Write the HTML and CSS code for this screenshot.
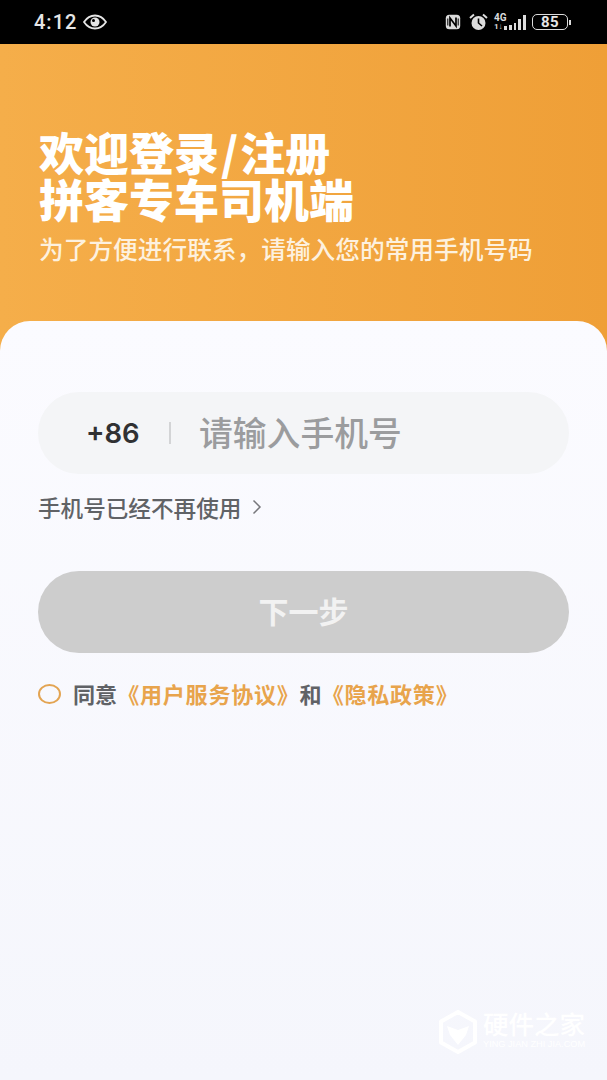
FILE: index.html
```html
<!DOCTYPE html>
<html lang="zh-CN">
<head>
<meta charset="utf-8">
<title>拼客专车司机端</title>
<link rel="stylesheet" href="styles.css">
</head>
<body>
<div class="status">
  <div class="status-left">
    <span class="time">4:12</span>
    <svg class="eye" width="24" height="16" viewBox="0 0 24 16">
      <path d="M1 8C4 3.500 8 1.500 12 1.500S20 3.500 23 8C20 12.500 16 14.500 12 14.500S4 12.500 1 8Z" fill="none" stroke="#e6e6e6" stroke-width="1.800"/>
      <circle cx="12" cy="8" r="4.500" fill="#e6e6e6"/>
      <circle cx="10.500" cy="6.500" r="1.500" fill="#000"/>
    </svg>
  </div>
  <div class="status-right">
    <svg class="nfc" width="16" height="16" viewBox="0 0 16 16">
      <rect x="0.800" y="0.800" width="14.400" height="14.400" rx="3.500" fill="#dcdcdc"/>
      <path d="M5 12.500V4L11 12V3.500" fill="none" stroke="#000" stroke-width="1.700"/>
      <path d="M2.800 4.500V11.500M13.200 4.500V11.500" stroke="#000" stroke-width="1"/>
    </svg>
    <svg class="alarm" width="19" height="18" viewBox="0 0 19 18">
      <circle cx="9.500" cy="10" r="7" fill="#dcdcdc"/>
      <path d="M9.500 5.500V10L13 13" fill="none" stroke="#000" stroke-width="1.600"/>
      <path d="M1 5L5 1.500M18 5L14 1.500" stroke="#dcdcdc" stroke-width="2"/>
    </svg>
    <div class="net">
      <span class="net-g">4G</span>
      <span class="net-s">1↓</span>
    </div>
    <div class="signal">
      <i class="s1"></i><i class="s2"></i><i class="s3"></i><i class="s4"></i><i class="s5"></i>
    </div>
    <div class="battery"><span>85</span></div>
    <div class="battery-tip"></div>
  </div>
</div>

<div class="hero">
  <h1>欢迎登录<span class="slash">/</span>注册<br>拼客专车司机端</h1>
  <p>为了方便进行联系，请输入您的常用手机号码</p>
</div>

<div class="card">
  <div class="phone">
    <span class="code">+86</span>
    <span class="sep"></span>
    <span class="hint">请输入手机号</span>
  </div>
  <div class="lost">
    <span>手机号已经不再使用</span>
    <svg width="10" height="16" viewBox="0 0 10 16"><path d="M1.500 1.500L8 8L1.500 14.500" fill="none" stroke="#77777b" stroke-width="1.500"/></svg>
  </div>
  <div class="next"><span>下一步</span></div>
  <div class="agree">
    <span class="radio"></span>
    <span class="agree-text">同意<a>《用户服务协议》</a>和<a>《隐私政策》</a></span>
  </div>
</div>

<div class="mark">
  <svg width="38" height="44" viewBox="0 0 38 44">
    <path d="M19 2L36 11.500V32.500L19 42L2 32.500V11.500Z" fill="none" stroke="#fff" stroke-width="4" stroke-linejoin="round"/>
    <path d="M8 16L19 20L30 16L27 25L19 35L11 25Z" fill="#fff"/>
  </svg>
  <div class="mark-text">
    <div class="mark-cn">硬件之家</div>
    <div class="mark-en">YING JIAN ZHI JIA.COM</div>
  </div>
</div>
</body>
</html>
```

FILE: styles.css
```css
* {
  box-sizing: border-box;
}
html, body {
  margin: 0;
  height: 1080px;
  overflow: hidden;
}
body {
  position: relative;
  display: flex;
  flex-direction: column;
  background: #f5f6fc;
  font-family: "Noto Sans CJK SC", "Noto Sans", sans-serif;
}

/* status bar */
.status {
  height: 44px;
  flex: none;
  background: #000;
  display: flex;
  align-items: center;
  justify-content: space-between;
  padding: 0 36px 0 34px;
  color: #e6e6e6;
}
.status-left {
  display: flex;
  align-items: center;
  gap: 6px;
}
.time {
  font-family: Roboto, sans-serif;
  font-size: 20px;
  font-weight: 500;
  letter-spacing: 1px;
}
.status-right {
  display: flex;
  align-items: center;
}
.nfc {
  margin-right: 8px;
}
.alarm {
  margin-right: 6px;
}
.net {
  display: flex;
  flex-direction: column;
  width: 10px;
  font-family: Roboto, sans-serif;
  font-weight: 700;
  color: #dcdcdc;
  line-height: 9px;
}
.net-g {
  font-size: 10px;
  white-space: nowrap;
}
.net-s {
  font-size: 8px;
  white-space: nowrap;
}
.signal {
  display: flex;
  align-items: flex-end;
  gap: 2px;
  height: 15px;
  margin-top: 1px;
  margin-right: 6px;
}
.signal i {
  width: 2.800px;
  background: #dcdcdc;
}
.s1 { height: 4px; }
.s2 { height: 5px; }
.s3 { height: 7px; }
.s4 { height: 11px; }
.s5 { height: 15px; }
.battery {
  width: 36px;
  height: 16px;
  border: 1.500px solid #dcdcdc;
  border-radius: 5px;
  display: flex;
  align-items: center;
  justify-content: center;
  font-family: Roboto, sans-serif;
  font-size: 15px;
  font-weight: 700;
  color: #e6e6e6;
  letter-spacing: 0.5px;
}
.battery-tip {
  width: 2px;
  height: 5px;
  margin-left: 1px;
  background: #dcdcdc;
}

/* orange header */
.hero {
  height: 307px;
  flex: none;
  padding: 84px 39px 0;
  color: #fff;
  background: linear-gradient(90deg, #f5ae4a, #ef9f37);
}
.hero h1 {
  margin: 0;
  font-size: 45px;
  line-height: 47px;
  font-weight: 900;
}
.slash {
  margin: 0 2px;
}
.hero p {
  margin: 9px 0 0;
  font-size: 24.700px;
  line-height: 34px;
  font-weight: 500;
  color: #fdf1df;
  white-space: nowrap;
}

/* white sheet */
.card {
  flex: 1;
  margin-top: -30px;
  padding: 71px 38px 0;
  border-radius: 30px 30px 0 0;
  background: linear-gradient(180deg, #fbfbff, #f5f6fc);
}
.phone {
  height: 82px;
  border-radius: 41px;
  background: #f4f5f7;
  display: flex;
  align-items: center;
  padding-left: 48px;
}
.code {
  width: 83px;
  font-family: Inter, sans-serif;
  font-size: 27.500px;
  font-weight: 600;
  color: #303133;
}
.sep {
  width: 2px;
  height: 22px;
  background: #d3d4d6;
}
.hint {
  margin-left: 28px;
  padding-bottom: 4px;
  font-size: 33.800px;
  font-weight: 500;
  color: #9b9c9e;
}
.lost {
  display: flex;
  align-items: center;
  gap: 11px;
  margin-top: 16px;
  height: 34px;
  font-size: 22.600px;
  font-weight: 500;
  color: #606266;
}
.next {
  margin-top: 47px;
  height: 82px;
  border-radius: 41px;
  background: #cdcdcd;
  display: flex;
  align-items: center;
  justify-content: center;
  font-size: 30px;
  font-weight: 700;
  color: #f2f2f2;
}
.next span {
  padding-bottom: 4px;
}
.agree {
  display: flex;
  align-items: center;
  gap: 12px;
  margin-top: 24px;
  height: 32px;
}
.radio {
  width: 23px;
  height: 20px;
  border: 2px solid #e3a452;
  border-radius: 50%;
  margin-top: 2px;
}
.agree-text {
  font-size: 22.100px;
  font-weight: 700;
  color: #606266;
  white-space: nowrap;
}
.agree-text a {
  color: #e8a44c;
  letter-spacing: 0.7px;
}

/* watermark over the corner */
.mark {
  position: absolute;
  left: 439px;
  top: 1010px;
  display: flex;
  align-items: center;
  gap: 6px;
  color: #fff;
}
.mark-text {
  margin-top: -4px;
}
.mark-cn {
  font-size: 25.500px;
  line-height: 28px;
  font-weight: 500;
}
.mark-en {
  font-family: "Liberation Sans", sans-serif;
  font-size: 9.200px;
  line-height: 14px;
  font-weight: 400;
  white-space: nowrap;
}
```
